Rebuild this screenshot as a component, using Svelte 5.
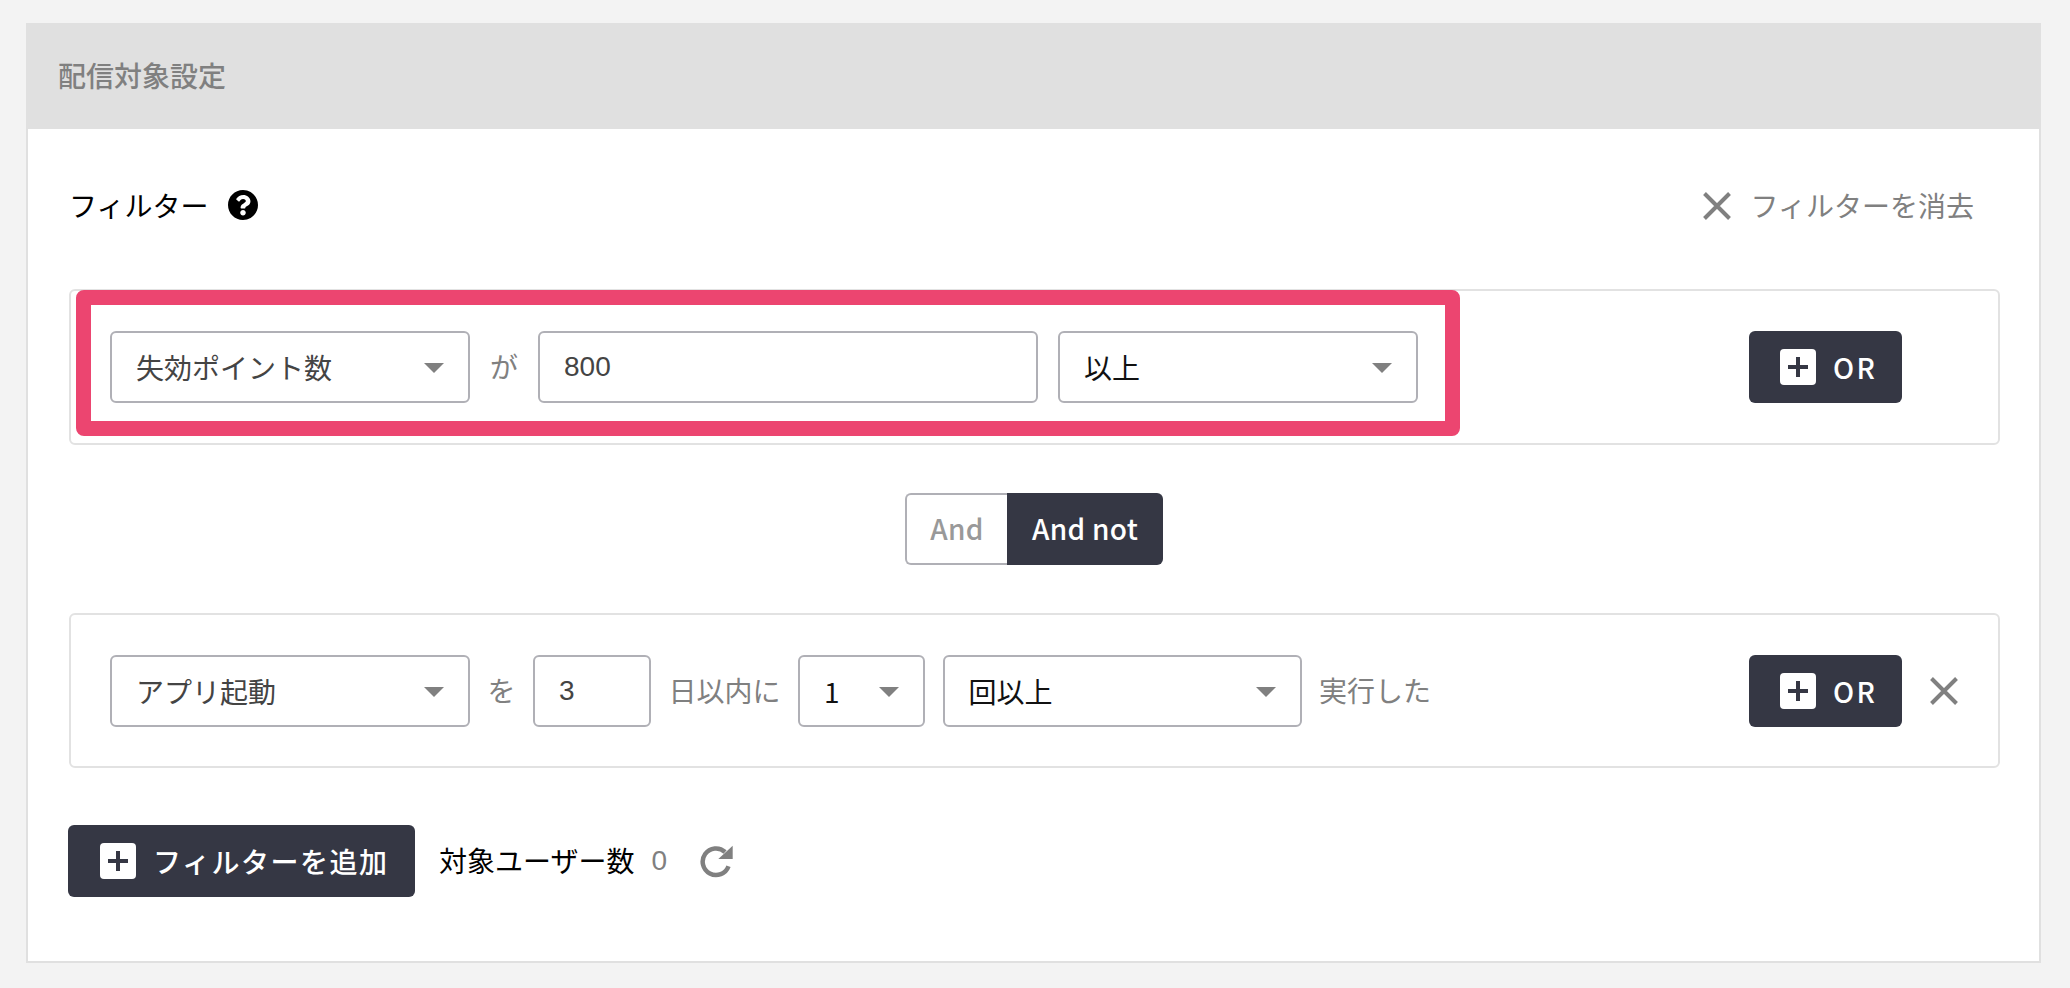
<script>
  const metric = ['失効ポイント数'];
</script>

{#snippet dropdown(options, cls)}
  <span class="select {cls}">
    <select>
      {#each options as o}<option>{o}</option>{/each}
    </select>
  </span>
{/snippet}

{#snippet orButton()}
  <button class="btn or" type="button"><span class="plus"></span><span>OR</span></button>
{/snippet}

<div class="page">
  <section class="card">
    <header class="card-head">配信対象設定</header>
    <div class="card-body">
      <div class="filter-head">
        <div class="filter-title">
          <span>フィルター</span>
          <svg class="help" viewBox="8 8 496 496" aria-hidden="true"><path d="M504 256c0 136.997-111.043 248-248 248S8 392.997 8 256C8 119.083 119.043 8 256 8s248 111.083 248 248zM262.655 90c-54.497 0-89.255 22.957-116.549 63.758-3.536 5.286-2.353 12.415 2.715 16.258l34.699 26.31c5.205 3.947 12.621 3.008 16.665-2.122 17.864-22.658 30.113-35.797 57.303-35.797 20.429 0 45.698 13.148 45.698 32.958 0 14.976-12.363 22.667-32.534 33.976C247.128 238.528 216 254.941 216 296v4c0 6.627 5.373 12 12 12h56c6.627 0 12-5.373 12-12v-1.333c0-28.462 83.186-29.647 83.186-106.667 0-58.002-60.165-102-116.531-102zM256 338c-25.365 0-46 20.635-46 46 0 25.364 20.635 46 46 46s46-20.636 46-46c0-25.365-20.635-46-46-46z"/></svg>
        </div>
        <div class="clear">
          <svg class="x" viewBox="0 0 28 28" aria-hidden="true"><path d="M1.5 1.5 26.5 26.5M26.5 1.5 1.5 26.5"/></svg>
          <span>フィルターを消去</span>
        </div>
      </div>

      <div class="group first">
        <div class="fields wide">
          {@render dropdown(metric, 'w360 soft')}
          <span class="word">が</span>
          <input class="input w500" value="800" />
          {@render dropdown(['以上'], 'w360')}
        </div>
        <div class="actions">{@render orButton()}</div>
        <div class="highlight"></div>
      </div>

      <div class="toggle">
        <span class="opt">And</span>
        <span class="opt on">And not</span>
      </div>

      <div class="group second">
        <div class="fields">
          {@render dropdown(['アプリ起動'], 'w360 soft')}
          <span class="word">を</span>
          <input class="input w118" value="3" />
          <span class="word">日以内に</span>
          {@render dropdown(['1'], 'w127')}
          {@render dropdown(['回以上'], 'w359')}
          <span class="word">実行した</span>
        </div>
        <div class="actions">
          {@render orButton()}
          <svg class="x remove" viewBox="0 0 28 28" aria-hidden="true"><path d="M1.5 1.5 26.5 26.5M26.5 1.5 1.5 26.5"/></svg>
        </div>
      </div>

      <div class="bottom">
        <button class="btn add" type="button"><span class="plus"></span><span>フィルターを追加</span></button>
        <span class="count-label">対象ユーザー数</span>
        <span class="count">0</span>
        <svg class="refresh" viewBox="0 0 34 33" aria-hidden="true">
          <path class="ring" d="M28.5 21.2A13.3 13.3 0 1 1 25.1 7"/>
          <path class="head" d="M32.7.7V14H18.3z"/>
        </svg>
      </div>
    </div>
  </section>
</div>

<style>
  :global(body) {
    margin: 0;
    background: #f3f3f3;
  }
  .page {
    box-sizing: border-box;
    width: 2070px;
    height: 988px;
    padding: 23px 29px 25px 26px;
    font-family: "Noto Sans CJK JP", "Noto Sans", sans-serif;
    font-size: 28px;
    line-height: 1.2;
    color: #000;
  }
  .card {
    box-sizing: border-box;
    height: 940px;
    background: #fff;
    border: 2px solid #e0e0e0;
    border-top: 0;
  }
  .card-head {
    display: flex;
    align-items: center;
    height: 106px;
    margin: 0 -2px;
    padding-left: 32px;
    background: #e0e0e0;
    color: #808080;
    font-weight: 500;
  }
  .card-body {
    padding: 41px 39px 0 41px;
  }
  .filter-head {
    display: flex;
    align-items: center;
    justify-content: space-between;
    height: 72px;
    margin-bottom: 47px;
  }
  .filter-title {
    display: flex;
    align-items: center;
  }
  .help {
    width: 30px;
    height: 30px;
    margin: -2px 0 0 20px;
    fill: #000;
  }
  .clear {
    display: flex;
    align-items: center;
    margin-right: 26px;
    color: #808080;
  }
  .x {
    flex: none;
    width: 28px;
    height: 28px;
    fill: none;
    stroke: #808080;
    stroke-width: 4;
  }
  .clear .x {
    margin-right: 20px;
  }
  .group {
    position: relative;
    box-sizing: border-box;
    display: flex;
    align-items: center;
    justify-content: space-between;
    border: 2px solid #e2e2e2;
    border-radius: 6px;
    padding-left: 39px;
  }
  .first {
    height: 156px;
  }
  .second {
    height: 155px;
  }
  .fields {
    display: flex;
    align-items: center;
    gap: 17.5px;
  }
  .fields.wide {
    gap: 20px;
  }
  .word {
    color: #808080;
    white-space: nowrap;
  }
  .select {
    position: relative;
    display: block;
    flex: none;
    height: 72px;
  }
  .select::after {
    content: "";
    position: absolute;
    top: 32px;
    right: 26px;
    border-style: solid;
    border-width: 10px 10px 0;
    border-color: #808080 transparent transparent;
    pointer-events: none;
  }
  .select select,
  .input {
    box-sizing: border-box;
    display: block;
    width: 100%;
    height: 72px;
    margin: 0;
    padding: 0 0 0 24px;
    background: #fff;
    border: 2px solid #b0b0b6;
    border-radius: 6px;
    font-family: inherit;
    font-size: inherit;
    color: #111;
    appearance: none;
    outline: none;
  }
  .soft select {
    color: #444;
  }
  .input {
    flex: none;
    font-family: "Liberation Sans", sans-serif;
    color: #444;
  }
  .w360 {
    width: 360px;
  }
  .w359 {
    width: 359px;
  }
  .w127 {
    width: 127px;
  }
  .w500 {
    width: 500px;
  }
  .w118 {
    width: 118px;
  }
  .actions {
    display: flex;
    align-items: center;
    flex: none;
    width: 249px;
  }
  .remove {
    margin-left: 28px;
  }
  .btn {
    display: flex;
    align-items: center;
    box-sizing: border-box;
    height: 72px;
    background: #353744;
    border: 0;
    border-radius: 6px;
    color: #fff;
    font-family: inherit;
    font-size: inherit;
    font-weight: 500;
    gap: 17px;
  }
  .or {
    width: 153px;
    padding: 0 0 0 31px;
    letter-spacing: 2.5px;
  }
  .add {
    width: 347px;
    padding: 0 0 0 32px;
    letter-spacing: 1.5px;
  }
  .plus {
    position: relative;
    flex: none;
    width: 36px;
    height: 36px;
    background: #fff;
    border-radius: 4px;
  }
  .plus::before,
  .plus::after {
    content: "";
    position: absolute;
    background: #353744;
  }
  .plus::before {
    left: 8px;
    right: 8px;
    top: 16px;
    height: 4px;
  }
  .plus::after {
    top: 8px;
    bottom: 8px;
    left: 16px;
    width: 4px;
  }
  .highlight {
    position: absolute;
    box-sizing: border-box;
    left: 5px;
    top: -1px;
    width: 1384px;
    height: 146px;
    border: 15px solid #ec4570;
    border-radius: 8px;
    pointer-events: none;
  }
  .toggle {
    display: flex;
    width: 258px;
    height: 72px;
    margin: 48px 0 48px 836px;
  }
  .opt {
    box-sizing: border-box;
    display: flex;
    align-items: center;
    justify-content: center;
    width: 102px;
    border: 2px solid #b0b0b6;
    border-right: 0;
    border-radius: 6px 0 0 6px;
    color: #999;
    font-weight: 500;
    letter-spacing: 0.3px;
  }
  .opt.on {
    width: 156px;
    border: 0;
    border-radius: 0 6px 6px 0;
    background: #353744;
    color: #fff;
  }
  .bottom {
    display: flex;
    align-items: center;
    height: 72px;
    margin-top: 57px;
    margin-left: -1px;
  }
  .count-label {
    margin-left: 24px;
  }
  .count {
    margin-left: 17px;
    color: #808080;
    font-family: "Liberation Sans", sans-serif;
  }
  .refresh {
    width: 34px;
    height: 33px;
    margin-left: 33px;
  }
  .ring {
    fill: none;
    stroke: #808080;
    stroke-width: 4.5;
  }
  .head {
    fill: #808080;
  }
</style>
